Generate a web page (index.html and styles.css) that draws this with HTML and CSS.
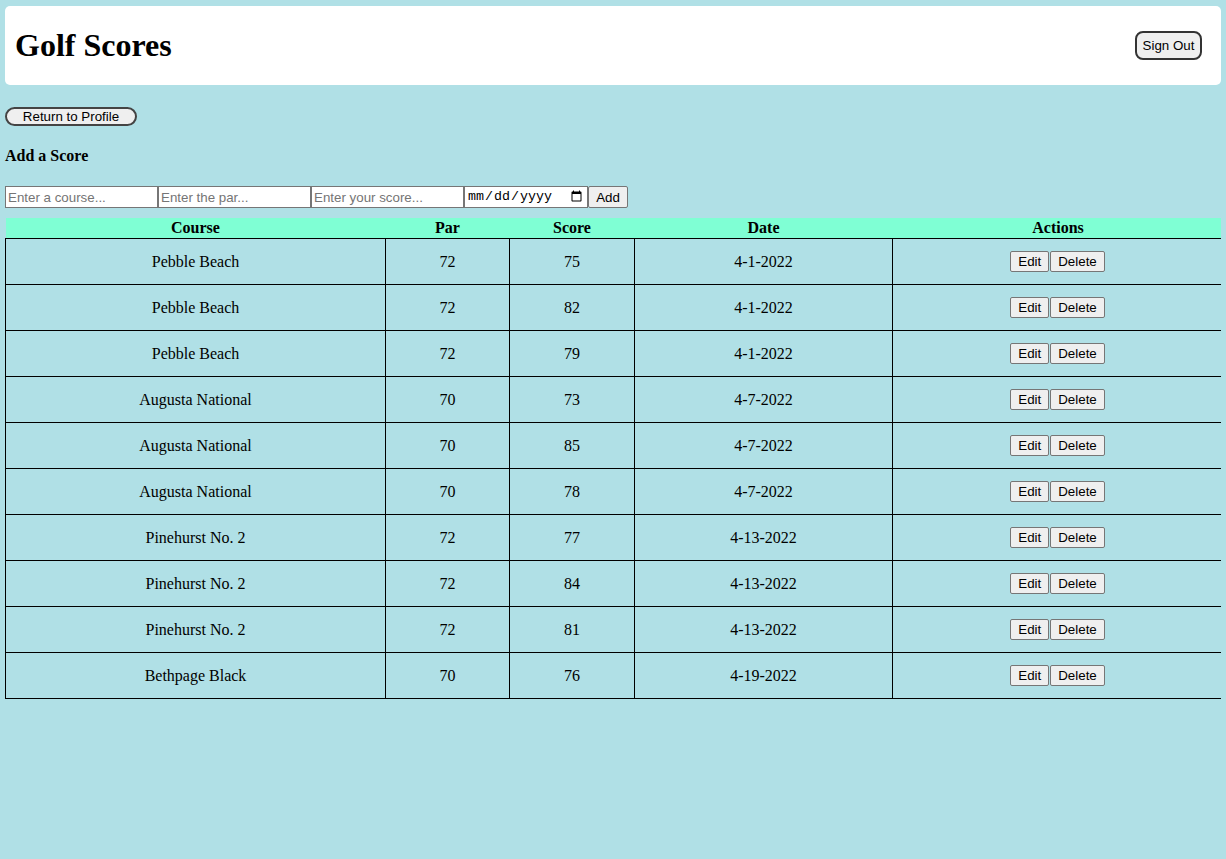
FILE: index.html
```html
<!DOCTYPE html>
<html>
<head>
<meta charset="utf-8">
<link rel="stylesheet" href="styles.css">
</head>
<body>
<header class="topbar">
  <h1 class="title">Golf Scores</h1>
  <button class="signout">Sign Out</button>
</header>
<div class="nav"><button class="return">Return to Profile</button></div>
<h4 class="subtitle">Add a Score</h4>
<form class="addform"><input type="text" placeholder="Enter a course..."><input type="text" placeholder="Enter the par..."><input type="text" placeholder="Enter your score..."><input type="date" class="date"><button type="button" class="add">Add</button></form>
<table class="scores">
  <colgroup>
    <col class="c-course"><col class="c-par"><col class="c-score"><col class="c-date"><col class="c-actions">
  </colgroup>
  <thead>
    <tr><th>Course</th><th>Par</th><th>Score</th><th>Date</th><th>Actions</th></tr>
  </thead>
  <tbody>
    <tr><td>Pebble Beach</td><td>72</td><td>75</td><td>4-1-2022</td><td class="actions"><button>Edit</button><button>Delete</button></td></tr>
    <tr><td>Pebble Beach</td><td>72</td><td>82</td><td>4-1-2022</td><td class="actions"><button>Edit</button><button>Delete</button></td></tr>
    <tr><td>Pebble Beach</td><td>72</td><td>79</td><td>4-1-2022</td><td class="actions"><button>Edit</button><button>Delete</button></td></tr>
    <tr><td>Augusta National</td><td>70</td><td>73</td><td>4-7-2022</td><td class="actions"><button>Edit</button><button>Delete</button></td></tr>
    <tr><td>Augusta National</td><td>70</td><td>85</td><td>4-7-2022</td><td class="actions"><button>Edit</button><button>Delete</button></td></tr>
    <tr><td>Augusta National</td><td>70</td><td>78</td><td>4-7-2022</td><td class="actions"><button>Edit</button><button>Delete</button></td></tr>
    <tr><td>Pinehurst No. 2</td><td>72</td><td>77</td><td>4-13-2022</td><td class="actions"><button>Edit</button><button>Delete</button></td></tr>
    <tr><td>Pinehurst No. 2</td><td>72</td><td>84</td><td>4-13-2022</td><td class="actions"><button>Edit</button><button>Delete</button></td></tr>
    <tr><td>Pinehurst No. 2</td><td>72</td><td>81</td><td>4-13-2022</td><td class="actions"><button>Edit</button><button>Delete</button></td></tr>
    <tr><td>Bethpage Black</td><td>70</td><td>76</td><td>4-19-2022</td><td class="actions"><button>Edit</button><button>Delete</button></td></tr>
  </tbody>
</table>
</body>
</html>
```
FILE: styles.css
```css
html { background: #b0e0e6; }
body {
  margin: 6px 5px 5px 5px;
  background: #b0e0e6;
  font-family: "Liberation Serif", "Times New Roman", serif;
  font-size: 16px;
  color: #000;
}
button, input {
  font-family: "Liberation Sans", Arial, sans-serif;
  font-size: 13.33px;
}
.topbar {
  background: #fff;
  border-radius: 5px;
  height: 79px;
  display: flex;
  align-items: center;
  justify-content: space-between;
  padding: 0 10px;
}
.title {
  font-size: 32px;
  font-weight: bold;
  margin: 0;
}
.signout {
  margin-right: 9px;
  width: 67px;
  height: 29px;
  padding: 0;
  border: 2px solid #333;
  border-radius: 8px;
  background: #efefef;
  color: #000;
}
.nav { margin-top: 22px; line-height: 0; }
.return {
  width: 132px;
  height: 19px;
  padding: 0;
  border: 2px solid #444;
  border-radius: 10px;
  background: #efefef;
  color: #000;
  line-height: 15px;
}
.subtitle {
  font-size: 16px;
  font-weight: bold;
  margin: 21px 0 21px 0;
}
.addform {
  display: flex;
  margin: 0 0 10px 0;
  height: 22px;
}
.addform input {
  width: 153px;
  height: 22px;
  box-sizing: border-box;
  border: 1px solid #767676;
  margin: 0;
  padding: 1px 2px;
  background: #fff;
}
.addform .date {
  width: 124px;
  font-family: "Liberation Mono", monospace;
  font-size: 13.33px;
}
.add {
  height: 22px;
  width: 40px;
  margin: 0;
  padding: 0;
  border: 1px solid #767676;
  border-radius: 2px;
  background: #efefef;
  color: #000;
}
.scores {
  width: 1218px;
  border-collapse: collapse;
  table-layout: fixed;
}
.c-course { width: 380px; }
.c-par { width: 124px; }
.c-score { width: 125px; }
.c-date { width: 258px; }
.c-actions { width: 331px; }
.scores th {
  background: #7fffd4;
  font-weight: bold;
  padding: 1px;
  height: 18px;
  line-height: 18px;
  text-align: center;
}
.scores td {
  border: 1px solid #000;
  padding: 12px 1px;
  height: 21px;
  text-align: center;
  vertical-align: middle;
}
.actions button {
  height: 21px;
  margin: 0 1px 0 0;
  padding: 1px 7px;
  border: 1px solid #767676;
  border-radius: 2px;
  background: #efefef;
  color: #000;
  vertical-align: middle;
}
```
